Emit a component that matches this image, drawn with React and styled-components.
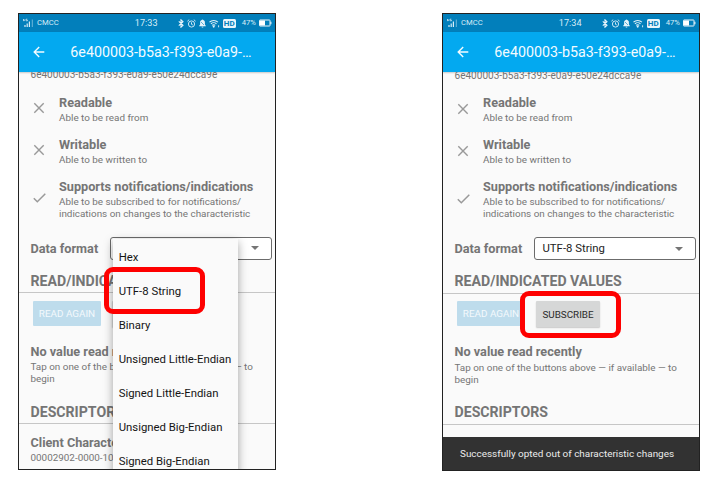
import React from "react";
import styled, { createGlobalStyle } from "styled-components";

const Global = createGlobalStyle`
  *, *::before, *::after { box-sizing: border-box; }
  body { margin: 0; background: #fff; overflow: hidden; }
`;

const Stage = styled.main`
  display: flex;
  align-items: flex-start;
  gap: 166px;
  width: 714px;
  height: 486px;
  padding: 13px 0 0 18px;
  font-family: Roboto, "Liberation Sans", sans-serif;
  color: #757575;
`;

const Device = styled.section`
  position: relative;
  flex: none;
  width: 258px;
  height: ${(p) => p.$height}px;
`;

const Screen = styled.div`
  position: relative;
  display: flex;
  flex-direction: column;
  height: 100%;
  overflow: hidden;
  border: 1px solid #222;
  background: #fafafa;
`;

const StatusBar = styled.header`
  display: flex;
  align-items: center;
  flex: none;
  height: 18px;
  padding: 0 3px 0 4px;
  background: #027fbb;
  color: #d9edf7;
  position: relative;
  z-index: 1;
  svg { display: block; flex: none; }
`;

const Carrier = styled.span`
  width: 99px;
  margin-left: 3px;
  font-size: 7.7px;
  line-height: 12px;
`;

const Clock = styled.span`
  width: 43.5px;
  font-size: 9.1px;
  line-height: 12px;
`;

const StatusIcons = styled.div`
  display: flex;
  align-items: center;
  gap: 3px;
`;

const HdBadge = styled.span`
  width: 13px;
  height: 9px;
  margin-left: 3px;
  border-radius: 1.5px;
  background: #e9f5fb;
  color: #027fbb;
  font-size: 8px;
  font-weight: 700;
  line-height: 9.5px;
  text-align: center;
`;

const Charge = styled.span`
  margin: 0 3px 0 6px;
  font-size: 7.7px;
  line-height: 12px;
`;

const AppBar = styled.div`
  display: flex;
  align-items: center;
  flex: none;
  height: 40px;
  padding-left: 14px;
  gap: 25.3px;
  background: #03a9f0;
  box-shadow: 0 1px 1.5px rgba(0, 0, 0, 0.2);
  color: #f3fbff;
  position: relative;
  z-index: 1;
`;

const Title = styled.h1`
  margin: 0;
  font-size: 14.27px;
  font-weight: 400;
  line-height: 20px;
  white-space: nowrap;
`;

const Content = styled.div`
  flex: none;
  margin-top: ${(p) => p.$top}px;
`;

const Line = styled.p`
  margin: 0;
  font-size: 9.9px;
  line-height: 12px;
  white-space: nowrap;
`;

const Uuid = styled(Line)`
  padding-left: 11.5px;
  font-size: 10.06px;
`;

const Heading = styled.h3`
  margin: 0 0 2.2px;
  font-size: 12.7px;
  font-weight: 700;
  line-height: 15px;
  white-space: nowrap;
`;

const Features = styled.div`
  display: flex;
  flex-direction: column;
  gap: 12.9px;
  margin-top: 13.2px;
`;

const Feature = styled.div`
  display: grid;
  grid-template-columns: 40px 1fr;
  align-items: center;
  svg { display: block; margin: 0 0 2px 14px; }
`;

const FormatRow = styled.div`
  display: flex;
  align-items: center;
  height: 23px;
  margin-top: 17px;
  padding-left: 11.5px;
`;

const FormatLabel = styled(Heading)`
  width: 79.5px;
  margin: 0;
`;

const Select = styled.div`
  display: flex;
  align-items: center;
  justify-content: space-between;
  width: 162px;
  height: 23px;
  padding: 0 12.5px 0 7.5px;
  border: 1px solid #6b6b6b;
  border-radius: 3px;
  background: #fff;
  color: #222;
  font-size: 11.35px;
  line-height: 15px;
`;

const Caret = styled.i`
  border: 4px solid transparent;
  border-top-color: #757575;
  border-bottom: 0;
`;

const SectionTitle = styled.h2`
  margin: ${(p) => p.$gap}px 0 0;
  padding: 0 0 2.5px 11.5px;
  border-bottom: 1px solid #c6c6c6;
  font-size: 14.13px;
  font-weight: 700;
  line-height: 17px;
`;

const Actions = styled.div`
  display: flex;
  gap: 11px;
  margin-top: 7.5px;
  padding-left: 14px;
`;

const Button = styled.button`
  width: ${(p) => (p.$muted ? 68 : 64)}px;
  height: ${(p) => (p.$muted ? 25 : 26)}px;
  padding: 0;
  border: 0;
  border-radius: 1px;
  background: ${(p) => (p.$muted ? "#bedcec" : "#d6d7d7")};
  box-shadow: ${(p) => (p.$muted ? "none" : "0 1px 1.5px rgba(0,0,0,.2)")};
  color: ${(p) => (p.$muted ? "#f4f9fc" : "#2b2b2b")};
  font: 400 9.9px/25px Roboto, "Liberation Sans", sans-serif;
`;

const Block = styled.div`
  margin-top: ${(p) => p.$gap}px;
  padding-left: 11.5px;
`;

const Menu = styled.ul`
  position: absolute;
  top: 225px;
  left: 94px;
  z-index: 2;
  width: 125px;
  height: 250px;
  margin: 0;
  padding: 0.5px 0 0 5.7px;
  list-style: none;
  background: #fafafa;
  box-shadow: 0 3px 9px rgba(0, 0, 0, 0.36);
  color: #141414;
  font-size: 11.35px;
`;

const MenuItem = styled.li`
  height: 34.15px;
  line-height: 34px;
  white-space: nowrap;
`;

const Snackbar = styled.div`
  position: absolute;
  inset: auto 0 0 0;
  height: 33.4px;
  padding-left: 17px;
  background: #323232;
  color: #ececec;
  font-size: 9.92px;
  line-height: 34.4px;
  white-space: nowrap;
`;

const Highlight = styled.div`
  position: absolute;
  top: ${(p) => p.$top}px;
  left: ${(p) => p.$left}px;
  z-index: 3;
  width: 101px;
  height: 47px;
  border: 5px solid #fe0000;
  border-radius: 9px;
`;

const Signal = () => (
  <svg width="11" height="10" viewBox="0 0 11 10" fill="none" stroke="#d9edf7">
    <path d="M.8 3.2V1L.3 2.4h1.5M3 1.2h1.4M3 1v1.8h1.5V2" strokeWidth=".7" />
    <path d="M2 9V7M4.2 9V5.5M6.4 9V3.5" strokeWidth="1.2" />
    <path d="M9.3 9V1.5" strokeWidth="1" opacity=".5" />
  </svg>
);

const Bluetooth = () => (
  <svg width="6" height="9" viewBox="0 0 6 9" fill="none" stroke="#eaf6fc" strokeWidth="1.1">
    <path d="M.8 2.4 5 6.3 3 8.2V.8l2 1.9L.8 6.6" />
  </svg>
);

const Alarm = () => (
  <svg width="9" height="9" viewBox="0 0 9 9" fill="none" stroke="#e4f3fa" strokeWidth=".9">
    <circle cx="4.5" cy="5" r="3.1" />
    <path d="M.4 2.2 2.2.7M8.6 2.2 6.8.7M4.5 3.3v2l1.3.6" />
  </svg>
);

const Bell = () => (
  <svg width="7" height="9" viewBox="0 0 7 9" fill="#e4f3fa">
    <path d="M3.5.4c.5 0 .8.3.8.7 1.2.4 1.6 1.3 1.6 2.4v2l.9 1.2v.5H.2v-.5l.9-1.2v-2c0-1.1.4-2 1.6-2.4 0-.4.3-.7.8-.7ZM2.6 7.7h1.8c0 .6-.4.9-.9.9s-.9-.3-.9-.9Z" />
    <path d="m2 3 3 3" stroke="#027fbb" strokeWidth=".6" />
  </svg>
);

const Wifi = () => (
  <svg width="11" height="9" viewBox="0 0 11 9" fill="none" stroke="#e4f3fa" strokeWidth="1.1">
    <path d="M.5 3.2a6 6 0 0 1 8.4 0M1.9 4.9a4 4 0 0 1 5.6 0M3.2 6.4a2 2 0 0 1 3 0" />
    <circle cx="4.7" cy="7.6" r=".5" />
    <path d="M9.6 6.3v2" strokeWidth=".9" />
  </svg>
);

const Battery = () => (
  <svg width="13" height="8" viewBox="0 0 13 8">
    <rect x=".5" y="1" width="10.5" height="6" rx=".5" fill="none" stroke="#eff8fc" />
    <path d="M1 1.5h5v5H1zM11.4 2.8h1v2.4h-1z" fill="#fff" />
  </svg>
);

const BackArrow = () => (
  <svg width="12" height="12" viewBox="0 0 12 12" fill="none" stroke="#f3fbff" strokeWidth="1.4">
    <path d="M11.3 6H1.4M6.2 1 1.2 6l5 5" />
  </svg>
);

const Cross = () => (
  <svg width="12" height="12" viewBox="0 0 12 12" fill="none" stroke="#999" strokeWidth="1.4">
    <path d="m1.3 1.3 9.4 9.4m0-9.4-9.4 9.4" />
  </svg>
);

const Check = () => (
  <svg width="13" height="12" viewBox="0 0 13 12" fill="none" stroke="#999" strokeWidth="1.5">
    <path d="m.8 6.3 3.5 3.5 8-8" />
  </svg>
);

const features = [
  { name: "Readable", icon: Cross, lines: ["Able to be read from"] },
  { name: "Writable", icon: Cross, lines: ["Able to be written to"] },
  {
    name: "Supports notifications/indications",
    icon: Check,
    lines: [
      "Able to be subscribed to for notifications/",
      "indications on changes to the characteristic",
    ],
  },
];

const formats = [
  "Hex",
  "UTF-8 String",
  "Binary",
  "Unsigned Little-Endian",
  "Signed Little-Endian",
  "Unsigned Big-Endian",
  "Signed Big-Endian",
];

function Phone({ height, time, top, highlight, menuOpen, message }) {
  return (
    <Device $height={height}>
      <Screen>
        <StatusBar>
          <Signal />
          <Carrier>CMCC</Carrier>
          <Clock>{time}</Clock>
          <StatusIcons>
            <Bluetooth />
            <Alarm />
            <Bell />
            <Wifi />
          </StatusIcons>
          <HdBadge>HD</HdBadge>
          <Charge>47%</Charge>
          <Battery />
        </StatusBar>
        <AppBar>
          <BackArrow />
          <Title>6e400003-b5a3-f393-e0a9-…</Title>
        </AppBar>
        <Content $top={top}>
          <Uuid>6e400003-b5a3-f393-e0a9-e50e24dcca9e</Uuid>
          <Features>
            {features.map(({ name, icon: Icon, lines }) => (
              <Feature key={name}>
                <Icon />
                <div>
                  <Heading>{name}</Heading>
                  {lines.map((line) => (
                    <Line key={line}>{line}</Line>
                  ))}
                </div>
              </Feature>
            ))}
          </Features>
          <FormatRow>
            <FormatLabel>Data format</FormatLabel>
            <Select>
              <span>{menuOpen ? "" : "UTF-8 String"}</span>
              <Caret />
            </Select>
          </FormatRow>
          <SectionTitle $gap={13}>READ/INDICATED VALUES</SectionTitle>
          <Actions>
            <Button $muted>READ AGAIN</Button>
            <Button>{menuOpen ? "" : "SUBSCRIBE"}</Button>
          </Actions>
          <Block $gap={17}>
            <Heading>No value read recently</Heading>
            <Line>Tap on one of the buttons above — if available — to</Line>
            <Line>begin</Line>
          </Block>
          <SectionTitle $gap={18.6}>DESCRIPTORS</SectionTitle>
          {menuOpen && (
            <Block $gap={10.7}>
              <Heading>Client Characteristic</Heading>
              <Line>00002902-0000-1000</Line>
            </Block>
          )}
        </Content>
        {menuOpen && (
          <Menu>
            {formats.map((format) => (
              <MenuItem key={format}>{format}</MenuItem>
            ))}
          </Menu>
        )}
        {message && <Snackbar>{message}</Snackbar>}
      </Screen>
      <Highlight $left={highlight.left} $top={highlight.top} />
    </Device>
  );
}

export default function App() {
  return (
    <>
      <Global />
      <Stage>
        <Phone height={457} time="17:33" top={-2.6} highlight={{ left: 86, top: 254 }} menuOpen />
        <Phone
          height={458}
          time="17:34"
          top={-2.2}
          highlight={{ left: 78, top: 278 }}
          message="Successfully opted out of characteristic changes"
        />
      </Stage>
    </>
  );
}
